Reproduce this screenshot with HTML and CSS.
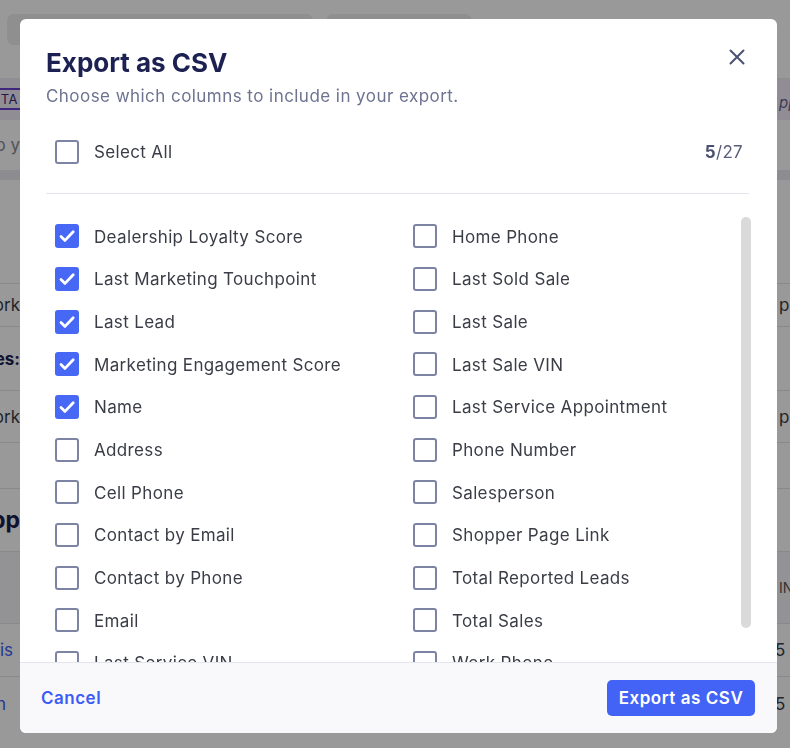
FILE: index.html
```html
<!DOCTYPE html>
<html lang="en">
<head>
<meta charset="utf-8">
<title>Export as CSV</title>
<link rel="stylesheet" href="styles.css">
</head>
<body>
<div class="page">
  <div class="topbar"><div class="pill pill-a"></div><div class="pill pill-b"></div></div>
  <div class="tabs">
    <div class="edge-l"><span class="beta">BETA</span></div>
    <div class="edge-r"><span class="tab-r">ppers</span></div>
  </div>
  <div class="search">
    <div class="edge-l"><span class="search-text">Search to y</span></div>
  </div>
  <div class="strip"></div>
  <div class="table-gap"></div>
  <div class="trow h43"><div class="edge-l"><span class="tx">Network</span></div><div class="edge-r"><span class="tx">pe</span></div></div>
  <div class="trow h64"><div class="edge-l"><span class="tx bold">Businesses:</span></div></div>
  <div class="trow h52"><div class="edge-l"><span class="tx">Network</span></div><div class="edge-r"><span class="tx">pe</span></div></div>
  <div class="trow h46"></div>
  <div class="trow h63"><div class="edge-l"><span class="tx heading">Shopp</span></div></div>
  <div class="trow h72 thead"><div class="edge-r"><span class="tx small">IN</span></div></div>
  <div class="trow h53"><div class="edge-l"><span class="tx link link-a">Travis</span></div><div class="edge-r"><span class="tx num">5</span></div></div>
  <div class="trow h54"><div class="edge-l"><span class="tx link link-b">John</span></div><div class="edge-r"><span class="tx num">5</span></div></div>
</div>

<div class="overlay">
  <div class="modal" role="dialog" aria-labelledby="modal-title">
    <div class="head">
      <div class="head-text">
        <h1 id="modal-title" class="title">Export as CSV</h1>
        <p class="subtitle">Choose which columns to include in your export.</p>
      </div>
      <button class="close" aria-label="Close">
        <svg viewBox="0 0 24 24" width="24" height="24"><path d="M5.5 5.5L18.5 18.5M18.5 5.5L5.5 18.5" fill="none" stroke="currentColor" stroke-width="2" stroke-linecap="round"/></svg>
      </button>
    </div>

    <div class="select-row">
      <label class="item">
        <span class="box"></span>
        <span class="label">Select All</span>
      </label>
      <span class="count"><b>5</b>/27</span>
    </div>
    <div class="divider"></div>

    <div class="body">
      <div class="columns">
        <div class="col">
          <div class="item"><span class="box checked"><svg viewBox="0 0 20 20"><path d="M4 10.4l4 4L16.2 5.8" fill="none" stroke="#fff" stroke-width="2.8" stroke-linecap="round" stroke-linejoin="round"/></svg></span><span class="label">Dealership Loyalty Score</span></div>
          <div class="item"><span class="box checked"><svg viewBox="0 0 20 20"><path d="M4 10.4l4 4L16.2 5.8" fill="none" stroke="#fff" stroke-width="2.8" stroke-linecap="round" stroke-linejoin="round"/></svg></span><span class="label">Last Marketing Touchpoint</span></div>
          <div class="item"><span class="box checked"><svg viewBox="0 0 20 20"><path d="M4 10.4l4 4L16.2 5.8" fill="none" stroke="#fff" stroke-width="2.8" stroke-linecap="round" stroke-linejoin="round"/></svg></span><span class="label">Last Lead</span></div>
          <div class="item"><span class="box checked"><svg viewBox="0 0 20 20"><path d="M4 10.4l4 4L16.2 5.8" fill="none" stroke="#fff" stroke-width="2.8" stroke-linecap="round" stroke-linejoin="round"/></svg></span><span class="label">Marketing Engagement Score</span></div>
          <div class="item"><span class="box checked"><svg viewBox="0 0 20 20"><path d="M4 10.4l4 4L16.2 5.8" fill="none" stroke="#fff" stroke-width="2.8" stroke-linecap="round" stroke-linejoin="round"/></svg></span><span class="label">Name</span></div>
          <div class="item"><span class="box"></span><span class="label">Address</span></div>
          <div class="item"><span class="box"></span><span class="label">Cell Phone</span></div>
          <div class="item"><span class="box"></span><span class="label">Contact by Email</span></div>
          <div class="item"><span class="box"></span><span class="label">Contact by Phone</span></div>
          <div class="item"><span class="box"></span><span class="label">Email</span></div>
          <div class="item"><span class="box"></span><span class="label">Last Service VIN</span></div>
          <div class="item"><span class="box"></span><span class="label">First Name</span></div>
          <div class="item"><span class="box"></span><span class="label">Last Name</span></div>
          <div class="item"><span class="box"></span><span class="label">Lead Source</span></div>
        </div>
        <div class="col">
          <div class="item"><span class="box"></span><span class="label">Home Phone</span></div>
          <div class="item"><span class="box"></span><span class="label">Last Sold Sale</span></div>
          <div class="item"><span class="box"></span><span class="label">Last Sale</span></div>
          <div class="item"><span class="box"></span><span class="label">Last Sale VIN</span></div>
          <div class="item"><span class="box"></span><span class="label">Last Service Appointment</span></div>
          <div class="item"><span class="box"></span><span class="label">Phone Number</span></div>
          <div class="item"><span class="box"></span><span class="label">Salesperson</span></div>
          <div class="item"><span class="box"></span><span class="label">Shopper Page Link</span></div>
          <div class="item"><span class="box"></span><span class="label">Total Reported Leads</span></div>
          <div class="item"><span class="box"></span><span class="label">Total Sales</span></div>
          <div class="item"><span class="box"></span><span class="label">Work Phone</span></div>
          <div class="item"><span class="box"></span><span class="label">Zip Code</span></div>
          <div class="item"><span class="box"></span><span class="label">Vehicle of Interest</span></div>
        </div>
      </div>
      <div class="scroll-thumb"></div>
    </div>

    <div class="footer">
      <button class="btn-link">Cancel</button>
      <button class="btn-primary">Export as CSV</button>
    </div>
  </div>
</div>
</body>
</html>
```
FILE: styles.css
```css
* { box-sizing: border-box; }
html, body { margin: 0; padding: 0; }
body {
  width: 790px;
  height: 748px;
  overflow: hidden;
  background: #fff;
  font-family: "Inter", "Noto Sans", "Liberation Sans", sans-serif;
  color: #3a3d46;
}

/* ---------- underlying page ---------- */
.page { width: 790px; }
.topbar { height: 46px; padding: 14px 0 0 7px; display: flex; gap: 13px; }
.pill { height: 31px; background: #eeeeee; border-radius: 7px; }
.pill-a { width: 306px; }
.pill-b { width: 146px; }

.tabs {
  margin-top: 32px;
  height: 42px;
  background: #f1ecf8;
  display: flex;
  align-items: center;
  justify-content: space-between;
}
.edge-l {
  width: 20px;
  display: flex;
  justify-content: flex-end;
  overflow: hidden;
  white-space: nowrap;
  flex: none;
}
.edge-r {
  width: 13px;
  display: flex;
  justify-content: flex-start;
  overflow: hidden;
  white-space: nowrap;
  flex: none;
  margin-left: auto;
  padding-left: 2px;
}
.beta {
  font-size: 13px;
  color: #3b2a7a;
  border-top: 2px solid #6a3fd0;
  border-bottom: 2px solid #6a3fd0;
  padding: 1px 2px;
  letter-spacing: 0.5px;
}
.tab-r { font-size: 15px; font-style: italic; color: #6a6390; padding-top: 6px; }

.search { height: 50px; display: flex; align-items: center; }
.search-text { font-size: 17px; color: #8a8a93; }
.strip { height: 10px; background: #eceaf1; }
.table-gap { height: 103px; }

.trow {
  display: flex;
  align-items: center;
  border-top: 1px solid #e4e4ea;
}
.h43 { height: 43px; }
.h64 { height: 64px; }
.h52 { height: 52px; }
.h46 { height: 46px; }
.h63 { height: 63px; }
.h72 { height: 72px; }
.h53 { height: 53px; }
.h54 { height: 54px; }
.thead { background: #f6f6f8; }
.tx { font-size: 17px; color: #3a3d46; }
.tx.bold { font-weight: 700; color: #1c2151; }
.tx.heading { font-size: 23px; font-weight: 700; color: #1c2151; }
.tx.small { font-size: 14px; color: #555; }
.tx.link { color: #3d5cf5; }
.tx.link-a { margin-right: 7px; }
.tx.link-b { margin-right: 14px; }
.tx.num { margin-left: -4px; }

/* ---------- overlay + modal ---------- */
.overlay {
  position: fixed;
  inset: 0;
  background: rgba(0, 0, 0, 0.4);
}
.modal {
  width: 757px;
  height: 714px;
  margin: 19px 0 0 20px;
  background: #fff;
  border-radius: 6px;
  display: flex;
  flex-direction: column;
  overflow: hidden;
}

.head {
  display: flex;
  justify-content: space-between;
  align-items: flex-start;
  padding: 28px 28px 0 26px;
}
.title {
  margin: 0;
  font-size: 26px;
  line-height: 32px;
  font-weight: 700;
  color: #1c2151;
}
.subtitle {
  margin: 5px 0 0;
  font-size: 17px;
  line-height: 24px;
  color: #6d7390;
  letter-spacing: 0.45px;
}
.close {
  margin-top: -2px;
  width: 24px;
  height: 24px;
  padding: 0;
  border: 0;
  background: none;
  color: #4b5173;
  display: flex;
}

.select-row {
  margin: 22px 34px 0 35px;
  height: 43px;
  display: flex;
  align-items: center;
  justify-content: space-between;
}
.count { font-size: 17px; color: #5a5f78; letter-spacing: 0.3px; }
.count b { font-weight: 700; color: #4a5070; }

.divider { margin: 20px 28px 0 26px; height: 1px; background: #e4e5eb; flex: none; }

.body {
  flex: 1;
  min-height: 0;
  display: flex;
  overflow: hidden;
  padding-left: 26px;
}
.columns {
  flex: 1;
  min-width: 0;
  display: grid;
  grid-template-columns: 358px 1fr;
  padding-top: 21px;
  align-items: start;
  overflow: hidden;
}
.col { display: flex; flex-direction: column; }

.item {
  height: 42.67px;
  display: flex;
  align-items: center;
  gap: 15px;
  padding-left: 9px;
}
.select-row .item { padding-left: 0; height: auto; }
.box {
  width: 24px;
  height: 24px;
  border: 2px solid #7d84a3;
  border-radius: 3px;
  flex: none;
  display: flex;
  align-items: center;
  justify-content: center;
}
.box.checked { background: #4767f5; border-color: #4767f5; }
.box svg { width: 20px; height: 20px; }
.label { font-size: 17px; color: #3a3d46; white-space: nowrap; letter-spacing: 0.35px; padding-top: 1px; }

.scroll-thumb {
  margin: 23px 26px 0 0;
  width: 10px;
  height: 411px;
  border-radius: 5px;
  background: #dadada;
  flex: none;
}

.footer {
  height: 71px;
  flex: none;
  border-top: 1px solid #e4e5ec;
  background: #f9f9fb;
  display: flex;
  align-items: center;
  justify-content: space-between;
  padding: 0 22px 0 21px;
}
.btn-link {
  border: 0;
  background: none;
  padding: 0;
  font-family: inherit;
  font-size: 17px;
  font-weight: 600;
  color: #3d5cf5;
  letter-spacing: 0.5px;
}
.btn-primary {
  border: 0;
  height: 36px;
  width: 148px;
  border-radius: 5px;
  background: #4263f5;
  color: #fff;
  font-family: inherit;
  font-size: 17px;
  font-weight: 600;
  padding: 0;
  letter-spacing: 0.55px;
}
```
